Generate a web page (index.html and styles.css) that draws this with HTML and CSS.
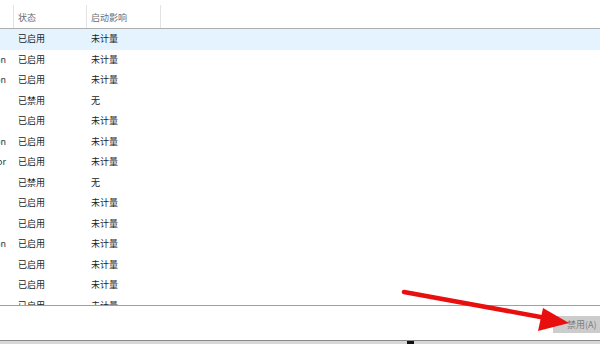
FILE: index.html
```html
<!DOCTYPE html>
<html lang="zh-CN">
<head>
<meta charset="utf-8">
<link rel="stylesheet" href="styles.css">
</head>
<body>
<div class="window">
  <div class="list">
    <div class="header">
      <div class="hcell name"></div>
      <div class="hcell status">状态</div>
      <div class="hcell impact">启动影响</div>
    </div>
    <div class="rows">
      <div class="row selected"><div class="cell name"><span></span></div><div class="cell status">已启用</div><div class="cell impact">未计量</div></div>
      <div class="row"><div class="cell name"><span>Windows Security notification</span></div><div class="cell status">已启用</div><div class="cell impact">未计量</div></div>
      <div class="row"><div class="cell name"><span>Microsoft OneDrive application</span></div><div class="cell status">已启用</div><div class="cell impact">未计量</div></div>
      <div class="row"><div class="cell name"><span></span></div><div class="cell status">已禁用</div><div class="cell impact">无</div></div>
      <div class="row"><div class="cell name"><span></span></div><div class="cell status">已启用</div><div class="cell impact">未计量</div></div>
      <div class="row"><div class="cell name"><span>Realtek HD Audio Application</span></div><div class="cell status">已启用</div><div class="cell impact">未计量</div></div>
      <div class="row"><div class="cell name"><span>Intel Graphics Monitor</span></div><div class="cell status">已启用</div><div class="cell impact">未计量</div></div>
      <div class="row"><div class="cell name"><span></span></div><div class="cell status">已禁用</div><div class="cell impact">无</div></div>
      <div class="row"><div class="cell name"><span></span></div><div class="cell status">已启用</div><div class="cell impact">未计量</div></div>
      <div class="row"><div class="cell name"><span></span></div><div class="cell status">已启用</div><div class="cell impact">未计量</div></div>
      <div class="row"><div class="cell name"><span>Cortana Application</span></div><div class="cell status">已启用</div><div class="cell impact">未计量</div></div>
      <div class="row"><div class="cell name"><span></span></div><div class="cell status">已启用</div><div class="cell impact">未计量</div></div>
      <div class="row"><div class="cell name"><span></span></div><div class="cell status">已启用</div><div class="cell impact">未计量</div></div>
      <div class="row"><div class="cell name"><span></span></div><div class="cell status">已启用</div><div class="cell impact">未计量</div></div>
    </div>
  </div>
  <div class="footer">
    <button class="btn" type="button">禁用(A)</button>
  </div>
  <div class="bottom"><span class="mark"></span></div>
  <svg class="arrow" width="600" height="344" viewBox="0 0 600 344">
    <line x1="404" y1="292" x2="546" y2="318" stroke="#e8100f" stroke-width="4.5" stroke-linecap="round"/>
    <polygon points="569,323 543,308 538,331" fill="#e8100f"/>
  </svg>
</div>
</body>
</html>
```

FILE: styles.css
```css
* { box-sizing: border-box; }
html, body { margin: 0; padding: 0; background: #fff; }
body {
  width: 600px;
  height: 344px;
  overflow: hidden;
  font-family: "Noto Sans CJK SC", "Microsoft YaHei", "Noto Sans", sans-serif;
  font-size: 9px;
  color: #1b1b1b;
}
.window {
  position: relative;
  width: 600px;
  height: 344px;
  display: flex;
  flex-direction: column;
}
.list {
  height: 305px;
  overflow: hidden;
  flex: none;
}
.header {
  height: 29px;
  display: flex;
  border-bottom: 1px solid #adadad;
}
.hcell {
  height: 28px;
  padding-top: 11px;
  color: #6d6d6d;
  line-height: 14px;
  position: relative;
}
.hcell.name { width: 14px; }
.hcell.status { width: 73px; padding-left: 4px; }
.hcell.impact { width: 74px; padding-left: 4px; }
.hcell::after {
  content: "";
  position: absolute;
  right: 0;
  top: 5px;
  bottom: 0;
  width: 1px;
  background: #e3e3e3;
}
.rows { display: flex; flex-direction: column; }
.row {
  height: 20.5px;
  display: flex;
  align-items: center;
}
.row.selected { background: #e5f3ff; }
.cell { line-height: 14px; white-space: nowrap; }
.cell.name {
  width: 14px;
  overflow: hidden;
  display: flex;
  justify-content: flex-end;
  padding-right: 8px;
  color: #333;
}
.cell.status { width: 73px; padding-left: 4px; }
.cell.impact { width: 74px; padding-left: 4px; }
.footer {
  flex: none;
  height: 35px;
  border-top: 1px solid #a0a0a0;
  display: flex;
  justify-content: flex-end;
  align-items: center;
  padding-top: 2px;
}
.btn {
  width: 47px;
  height: 17px;
  margin: 0;
  padding: 0 0 0 14px;
  border: none;
  background: #cccccc;
  color: #7c7c7c;
  font-family: inherit;
  font-size: 9px;
  text-align: left;
  line-height: 17px;
  white-space: nowrap;
  overflow: hidden;
}
.bottom {
  flex: 1;
  border-top: 1px solid #8a8a8a;
  background: #d8d8d8;
  position: relative;
}
.mark {
  position: absolute;
  left: 407px;
  top: 0;
  width: 7px;
  height: 4px;
  background: #111;
}
.arrow {
  position: absolute;
  left: 0;
  top: 0;
  pointer-events: none;
}
```
